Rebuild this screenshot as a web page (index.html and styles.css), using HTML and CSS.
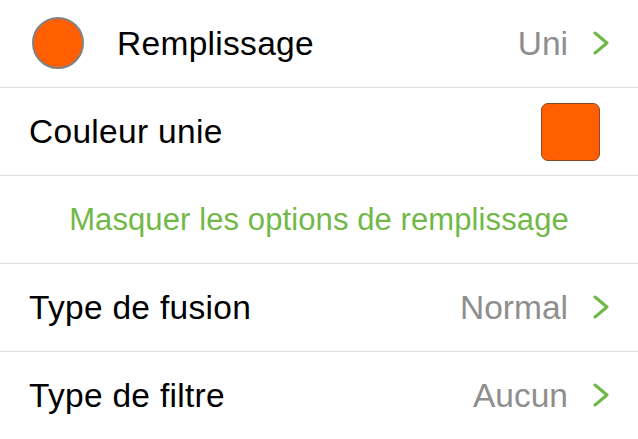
FILE: index.html
```html
<!DOCTYPE html>
<html lang="fr">
<head>
<meta charset="utf-8">
<title>Remplissage</title>
<link rel="stylesheet" href="styles.css">
</head>
<body>
<div class="list">
  <div class="row row-fill">
    <span class="swatch-circle"></span>
    <span class="label label-fill">Remplissage</span>
    <span class="value">Uni</span>
    <svg class="chevron" viewBox="0 0 16 24" width="16" height="24"><polyline points="2,2 14,12 2,22" fill="none" stroke="#70b845" stroke-width="3" stroke-linecap="round" stroke-linejoin="round"/></svg>
  </div>
  <div class="row row-color">
    <span class="label">Couleur unie</span>
    <span class="swatch-square"></span>
  </div>
  <div class="row row-action">
    <span class="action">Masquer les options de remplissage</span>
  </div>
  <div class="row">
    <span class="label">Type de fusion</span>
    <span class="value">Normal</span>
    <svg class="chevron" viewBox="0 0 16 24" width="16" height="24"><polyline points="2,2 14,12 2,22" fill="none" stroke="#70b845" stroke-width="3" stroke-linecap="round" stroke-linejoin="round"/></svg>
  </div>
  <div class="row row-last">
    <span class="label">Type de filtre</span>
    <span class="value">Aucun</span>
    <svg class="chevron" viewBox="0 0 16 24" width="16" height="24"><polyline points="2,2 14,12 2,22" fill="none" stroke="#70b845" stroke-width="3" stroke-linecap="round" stroke-linejoin="round"/></svg>
  </div>
</div>
</body>
</html>
```
FILE: styles.css
```css
html, body {
  margin: 0;
  padding: 0;
  background: #ffffff;
}

body {
  font-family: "Liberation Sans", Arial, sans-serif;
  color: #000000;
  width: 638px;
  height: 439px;
  overflow: hidden;
}

.list {
  display: flex;
  flex-direction: column;
}

.row {
  display: flex;
  align-items: center;
  height: 87px;
  border-bottom: 1px solid #e0e0e0;
  padding: 0 29px;
  box-sizing: content-box;
  font-size: 33.5px;
}

.row-last {
  border-bottom: none;
}

.row-fill {
  padding-left: 32px;
}

.swatch-circle {
  width: 52px;
  height: 52px;
  box-sizing: border-box;
  border-radius: 50%;
  background: #ff5f00;
  border: 2px solid #828282;
  flex: none;
  margin-top: -2px;
}

.label {
  flex: 1;
  white-space: nowrap;
  letter-spacing: 0.3px;
  padding-top: 1px;
}

.label-fill {
  margin-left: 33px;
}

.value {
  color: #8e8e8e;
  white-space: nowrap;
  padding-top: 1px;
}

.chevron {
  flex: none;
  margin-left: 25px;
  margin-top: -1px;
}

.row-color {
  padding-right: 38px;
}

.swatch-square {
  width: 59px;
  height: 58px;
  box-sizing: border-box;
  border-radius: 7px;
  background: #ff5f00;
  border: 1px solid #8a4a28;
  flex: none;
}

.row-action {
  justify-content: center;
  padding-left: 0;
  padding-right: 0;
}

.action {
  color: #72b849;
  font-size: 31px;
  letter-spacing: 0.1px;
  white-space: nowrap;
  padding-top: 1px;
}
```
